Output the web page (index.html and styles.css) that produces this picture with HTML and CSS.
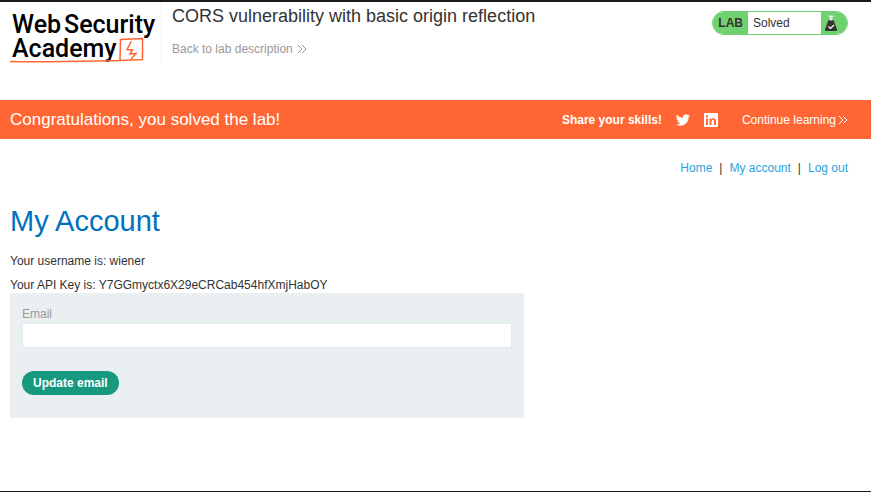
FILE: index.html
```html
<!DOCTYPE html>
<html lang="en">
<head>
    <meta charset="UTF-8">
    <meta name="viewport" content="width=device-width, initial-scale=1.0">
    <title>CORS vulnerability with basic origin reflection</title>
    <link rel="stylesheet" href="styles.css">
</head>
<body>
    <header class="lab-header">
        <a class="logo" href="#" aria-label="Web Security Academy">
            <svg width="150" height="56" viewBox="0 0 150 56">
                <text class="logo-text" x="2" y="25">Web</text>
                <text class="logo-text" x="54" y="25">Security</text>
                <text class="logo-text" x="2" y="49">Academy</text>
                <path d="M0 53.5C40 54.5 80 53 110 52.500L110.500 31.500L132.500 30.500L132.500 51.500L110 52.500" fill="none" stroke="#ff6633" stroke-width="1.500"/>
                <path d="M121.500 33L117 41.500L122.500 42L120 46L126 45.500L121 51" fill="none" stroke="#ff6633" stroke-width="1.500"/>
            </svg>
        </a>
        <div class="title">
            <h2>CORS vulnerability with basic origin reflection</h2>
            <a class="back-link" href="#">Back to lab description
                <svg class="chevrons" width="10" height="10" viewBox="0 0 10 10"><path d="M1 1L5 5L1 9M5 1L9 5L5 9"/></svg>
            </a>
        </div>
        <div class="lab-status">
            <span class="lab-label">LAB</span>
            <p>Solved</p>
            <span class="lab-icon">
                <svg width="14" height="16" viewBox="0 0 14 16">
                    <path d="M4.500 5H9.500L13 14.500Q13 16 12 16H2Q1 16 1 14.500Z" fill="#333332"/>
                    <path d="M4.500.500H9.500V2H8.500V5.500H5.500V2H4.500Z" fill="#d9efd7"/>
                    <path d="M4.500 11.500L6.500 13.500L10 10" fill="none" stroke="#fff" stroke-width="1.200"/>
                </svg>
            </span>
        </div>
    </header>

    <section class="banner">
        <h4>Congratulations, you solved the lab!</h4>
        <div class="banner-links">
            <strong>Share your skills!</strong>
            <a href="#" aria-label="Twitter">
                <svg width="14" height="12" viewBox="0 0 24 20"><path fill="#fff" d="M23.950 2.600a10 10 0 0 1-2.820.770A4.960 4.960 0 0 0 23.300.650a9.900 9.900 0 0 1-3.130 1.190A4.920 4.920 0 0 0 11.780 6.300C7.690 6.100 4.070 4.130 1.640 1.160a4.920 4.920 0 0 0 1.520 6.570 4.900 4.900 0 0 1-2.230-.610v.060a4.920 4.920 0 0 0 3.950 4.830 5 5 0 0 1-2.210.080 4.940 4.940 0 0 0 4.600 3.420A9.870 9.870 0 0 1 0 17.540a14 14 0 0 0 7.550 2.210c9.050 0 14-7.500 14-13.980 0-.210 0-.420-.020-.630a9.940 9.940 0 0 0 2.420-2.540z"/></svg>
            </a>
            <a href="#" aria-label="LinkedIn">
                <svg width="14" height="14" viewBox="0 0 14 14">
                    <rect x="0" y="0" width="14" height="14" rx="1" fill="#fff"/>
                    <path fill="#ff6633" d="M2 5.500H4V12H2ZM2 2.200H4V4.200H2ZM5.500 5.500H7.400V6.400C8.500 4.700 12 4.900 12 8V12H10V8.500C10 6.500 7.500 6.600 7.500 8.500V12H5.500Z"/>
                </svg>
            </a>
            <a class="continue-link" href="#">Continue learning
                <svg class="chevrons" width="10" height="10" viewBox="0 0 10 10"><path d="M1 1L5 5L1 9M5 1L9 5L5 9"/></svg>
            </a>
        </div>
    </section>

    <main>
        <nav class="top-links">
            <a href="#">Home</a><span>|</span><a href="#">My account</a><span>|</span><a href="#">Log out</a>
        </nav>
        <h1>My Account</h1>
        <p>Your username is: wiener</p>
        <p>Your API Key is: Y7GGmyctx6X29eCRCab454hfXmjHabOY</p>
        <form class="login-form">
            <label for="email">Email</label>
            <input type="email" id="email" name="email" required>
            <button type="submit">Update email</button>
        </form>
    </main>
</body>
</html>
```

FILE: styles.css
```css
* {
    box-sizing: border-box;
}
body {
    min-height: 100vh;
    margin: 0;
    border-top: 2px solid #1b1a1c;
    border-bottom: 1px solid #1b1a1c;
    background: #fff;
    color: #333332;
    font-family: "Liberation Sans", Arial, sans-serif;
    font-size: 12px;
    line-height: 16px;
}
h1, h2, h4, p {
    margin: 0;
    font-weight: normal;
}
a {
    text-decoration: none;
}
svg {
    display: block;
}
.lab-header {
    display: flex;
    align-items: flex-start;
    min-height: 98px;
    padding: 0 23px 0 10px;
}
.logo {
    padding-top: 6px;
    border-right: 1px solid #f8f8f8;
}
.logo-text {
    font-family: Roboto, sans-serif;
    font-size: 25px;
    font-weight: 500;
    fill: #000;
}
.title {
    flex: 1;
    padding: 4px 0 0 11px;
}
.title h2 {
    font-size: 18px;
    line-height: 20px;
}
.back-link {
    display: inline-flex;
    align-items: center;
    gap: 4px;
    margin-top: 15px;
    color: #999;
}
.chevrons {
    fill: none;
    stroke: currentColor;
    stroke-width: 1;
}
.lab-status {
    display: flex;
    align-items: stretch;
    height: 24px;
    margin-top: 9px;
    overflow: hidden;
    border: 1px solid #6fd16f;
    border-radius: 12px;
    line-height: 22px;
}
.lab-label {
    padding: 0 5px;
    background: #6fd16f;
    font-weight: bold;
}
.lab-status p {
    width: 73px;
    padding-left: 5px;
}
.lab-icon {
    display: flex;
    align-items: center;
    width: 26px;
    padding-left: 3px;
    background: #6fd16f;
}
.banner {
    display: flex;
    align-items: center;
    justify-content: space-between;
    min-height: 39px;
    padding: 0 23px 0 10px;
    background: #ff6633;
    color: #fff;
}
.banner h4 {
    font-size: 17px;
}
.banner-links {
    display: flex;
    align-items: center;
    gap: 14px;
}
.continue-link {
    display: flex;
    align-items: center;
    gap: 2px;
    margin-left: 10px;
    color: #fff;
}
main {
    padding: 21px 23px 0 10px;
}
.top-links {
    display: flex;
    justify-content: flex-end;
    gap: 7px;
}
.top-links a {
    color: #29a3dc;
}
h1 {
    margin: 26px 0 13px;
    color: #0071bc;
    font-size: 29px;
    line-height: 38px;
}
main p {
    margin-bottom: 8px;
}
.login-form {
    width: 62%;
    max-width: 514px;
    padding: 13px 12px 23px;
    background: #eaeff2;
}
main p:last-of-type {
    margin-bottom: 0;
}
.login-form label {
    display: block;
    color: #999;
}
.login-form input {
    display: block;
    width: 100%;
    height: 25px;
    margin: 1px 0 23px;
    padding: 0 8px;
    border: 1px solid #e4e9ec;
    background: #fff;
    font: inherit;
}
.login-form button {
    height: 24px;
    padding: 0 11px;
    border: none;
    border-radius: 12px;
    background: #17997f;
    color: #fff;
    font: inherit;
    font-weight: bold;
    cursor: pointer;
}
```
